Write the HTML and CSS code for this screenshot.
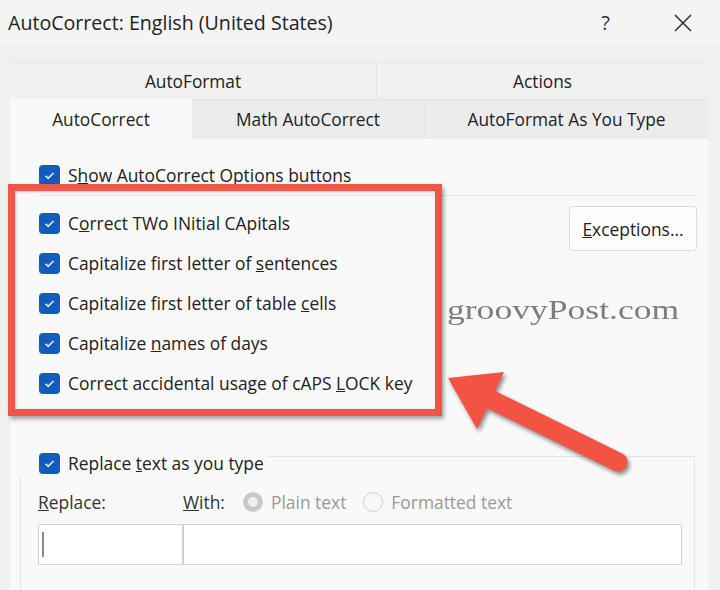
FILE: index.html
```html
<!DOCTYPE html>
<html>
<head>
<meta charset="utf-8">
<link rel="stylesheet" href="styles.css">
</head>
<body>
<div class="window">
  <div class="titlebar">
    <span class="title">AutoCorrect: English (United States)</span>
    <span class="help">?</span>
    <svg class="close" width="18" height="18" viewBox="0 0 18 18"><path d="M1 1 L17 17 M17 1 L1 17" stroke="#333" stroke-width="1.6" fill="none"/></svg>
  </div>
  <div class="content">
    <div class="tabs">
      <div class="tabrow row1">
        <div class="tab t-af">AutoFormat</div>
        <div class="tab t-act">Actions</div>
      </div>
      <div class="tabrow row2">
        <div class="tab t-ac selected">AutoCorrect</div>
        <div class="tab t-math">Math AutoCorrect</div>
        <div class="tab t-afayt">AutoFormat As You Type</div>
      </div>
    </div>
    <div class="panel">
      <div class="opt first"><span class="cb"><svg viewBox="0 0 21 21"><path d="M6.5 10.8 L9.2 13.3 L14.5 8" stroke="#fff" stroke-width="1.3" fill="none"/></svg></span><span>S<u>h</u>ow AutoCorrect Options buttons</span></div>
      <div class="sep"></div>
      <div class="main">
        <div class="opts">
          <div class="opt"><span class="cb"><svg viewBox="0 0 21 21"><path d="M6.5 10.8 L9.2 13.3 L14.5 8" stroke="#fff" stroke-width="1.3" fill="none"/></svg></span><span>C<u>o</u>rrect TWo INitial CApitals</span></div>
          <div class="opt"><span class="cb"><svg viewBox="0 0 21 21"><path d="M6.5 10.8 L9.2 13.3 L14.5 8" stroke="#fff" stroke-width="1.3" fill="none"/></svg></span><span>Capitalize first letter of <u>s</u>entences</span></div>
          <div class="opt"><span class="cb"><svg viewBox="0 0 21 21"><path d="M6.5 10.8 L9.2 13.3 L14.5 8" stroke="#fff" stroke-width="1.3" fill="none"/></svg></span><span>Capitalize first letter of table <u>c</u>ells</span></div>
          <div class="opt"><span class="cb"><svg viewBox="0 0 21 21"><path d="M6.5 10.8 L9.2 13.3 L14.5 8" stroke="#fff" stroke-width="1.3" fill="none"/></svg></span><span>Capitalize <u>n</u>ames of days</span></div>
          <div class="opt"><span class="cb"><svg viewBox="0 0 21 21"><path d="M6.5 10.8 L9.2 13.3 L14.5 8" stroke="#fff" stroke-width="1.3" fill="none"/></svg></span><span>Correct accidental usage of cAPS <u>L</u>OCK key</span></div>
        </div>
        <div class="exc"><u>E</u>xceptions...</div>
      </div>
      <div class="group">
        <div class="group-head"><span class="cb"><svg viewBox="0 0 21 21"><path d="M6.5 10.8 L9.2 13.3 L14.5 8" stroke="#fff" stroke-width="1.3" fill="none"/></svg></span><span>Replace <u>t</u>ext as you type</span></div>
        <div class="labels">
          <span class="lbl-rep"><u>R</u>eplace:</span>
          <span class="lbl-with"><u>W</u>ith:</span>
          <span class="radio filled"></span><span class="dis">Plain text</span>
          <span class="radio empty"></span><span class="dis">Formatted text</span>
        </div>
        <div class="inputs">
          <div class="in1"><span class="caret"></span></div>
          <div class="in2"></div>
        </div>
      </div>
      <div class="redbox"></div>
      <div class="watermark">groovyPost.com</div>
      <svg class="arrow" width="220" height="130" viewBox="0 0 220 130">
        <path d="M60 43 L188 106" stroke="#f25342" stroke-width="19" stroke-linecap="round" fill="none"/>
        <polygon points="18,22 74,16 47,73" fill="#f25342"/>
      </svg>
    </div>
  </div>
</div>
</body>
</html>
```
FILE: styles.css
```css
html, body {
  margin: 0;
  padding: 0;
  background: #f0f0f0;
}
body {
  font-family: "Open Sans", "Noto Sans", sans-serif;
  color: #222;
  width: 720px;
  height: 590px;
  overflow: hidden;
}
.window {
  width: 720px;
  height: 590px;
  display: flex;
  flex-direction: column;
}
.titlebar {
  height: 45px;
  flex: none;
  background: #f4f4f4;
  display: flex;
  align-items: center;
  padding-left: 8px;
  box-sizing: border-box;
}
.title {
  font-size: 19.6px;
  color: #222;
}
.help {
  margin-left: auto;
  font-size: 20px;
  color: #333;
  margin-right: 64px;
}
.close {
  margin-right: 28px;
}
.content {
  flex: 1;
  padding: 17px 12px 0 10px;
  display: flex;
  flex-direction: column;
}
.tabs {
  display: flex;
  flex-direction: column;
}
.tabrow {
  display: flex;
}
.tab {
  font-size: 17.3px;
  display: flex;
  align-items: center;
  justify-content: center;
  box-sizing: border-box;
  color: #222;
}
.row1 {
  height: 36px;
  background: #f1f1f1;
  border-top: 1px solid #e6e6e6;
  border-radius: 3px 3px 0 0;
}
.t-af { width: 367px; border-right: 1px solid #e2e2e2; }
.t-act { flex: 1; }
.row2 {
  height: 40px;
}
.t-ac {
  width: 182px;
  background: #f9f9f9;
}
.t-math {
  width: 233px;
  background: #ececec;
  border-top: 1px solid #e2e2e2;
  border-right: 1px solid #e2e2e2;
}
.t-afayt {
  flex: 1;
  background: #ececec;
  border-top: 1px solid #e2e2e2;
}
.panel {
  flex: 1;
  position: relative;
  background: #f9f9f9;
  padding-top: 16px;
  display: flex;
  flex-direction: column;
}
.opt {
  height: 40px;
  display: flex;
  align-items: center;
  padding-left: 29px;
  font-size: 17.4px;
  color: #222;
}
.cb {
  width: 21px;
  height: 21px;
  border-radius: 4px;
  background: #115cbd;
  flex: none;
  margin-right: 8px;
  display: flex;
}
.cb svg {
  width: 21px;
  height: 21px;
}
.sep {
  height: 1px;
  background: #e4e4e4;
  margin: 0 11px 0 28px;
}
.main {
  display: flex;
  margin-top: 7px;
}
.opts {
  display: flex;
  flex-direction: column;
}
.exc {
  margin-left: auto;
  margin-right: 11px;
  margin-top: 3px;
  width: 128px;
  height: 45px;
  box-sizing: border-box;
  background: #fdfdfd;
  border: 1px solid #dcdcdc;
  border-radius: 4px;
  display: flex;
  align-items: center;
  justify-content: center;
  font-size: 17.4px;
  color: #222;
}
.group {
  margin: 53px 13px 0 10px;
  border: 1px solid #e4e4e4;
  border-bottom: none;
  flex: 1;
  padding: 0 11px 0 17px;
}
.group-head {
  margin-top: -6px;
  margin-left: -18px;
  padding-left: 19px;
  height: 24px;
  width: 228px;
  background: #f9f9f9;
  display: flex;
  align-items: center;
  font-size: 17.4px;
  white-space: nowrap;
}
.labels {
  margin-top: 12px;
  height: 30px;
  display: flex;
  align-items: center;
  font-size: 17.4px;
}
.lbl-rep { width: 145px; color: #333; }
.lbl-with { width: 60px; color: #333; }
.dis { color: #9a9a9a; margin-right: 17px; }
.radio {
  width: 20px;
  height: 20px;
  border-radius: 50%;
  box-sizing: border-box;
  margin-right: 8px;
  flex: none;
}
.radio.filled {
  border: 5px solid #c9c9c9;
  background: #efefef;
}
.radio.empty {
  border: 1.5px solid #cfcfcf;
  background: #f9f9f9;
}
.inputs {
  margin-top: 7px;
  height: 39px;
  display: flex;
  border: 1px solid #d2d2d2;
  background: #fff;
  margin-right: 1px;
}
.in1 {
  width: 145px;
  box-sizing: border-box;
  border-right: 2px solid #cfcfcf;
  display: flex;
  align-items: center;
  padding-left: 3px;
}
.caret {
  width: 2px;
  height: 25px;
  background: #8a8a8a;
}
.in2 { flex: 1; }
.redbox {
  position: absolute;
  left: -2px;
  top: 45px;
  width: 434px;
  height: 232px;
  box-sizing: border-box;
  border: 7px solid #f0554a;
  box-shadow: 2px 3px 4px rgba(0,0,0,0.35), inset 1px 1px 3px rgba(0,0,0,0.2);
}
.watermark {
  position: absolute;
  left: 437px;
  top: 155px;
  font-family: "Liberation Serif", serif;
  font-size: 28px;
  color: #7d7d7d;
  transform: scaleX(1.27);
  transform-origin: left center;
}
.arrow {
  position: absolute;
  left: 420px;
  top: 217px;
  filter: drop-shadow(2px 3px 2px rgba(0,0,0,0.45));
}
```
